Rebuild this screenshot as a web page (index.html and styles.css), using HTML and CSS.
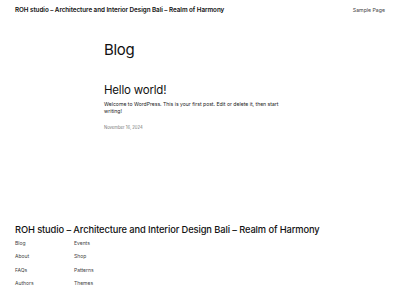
FILE: index.html
```html
<!DOCTYPE html>
<html lang="en">
<head>
    <meta charset="UTF-8">
    <meta name="viewport" content="width=device-width, initial-scale=1.0">
    <title>Blog</title>
    <link rel="stylesheet" href="styles.css">
</head>
<body>
    <header class="site-header">
        <a class="site-title" href="#">ROH studio – Architecture and Interior Design Bali – Realm of Harmony</a>
        <a class="nav-link" href="#">Sample Page</a>
    </header>

    <main class="content">
        <h1 class="page-title">Blog</h1>
        <article class="post">
            <h2 class="post-title">Hello world!</h2>
            <p class="post-excerpt">Welcome to WordPress. This is your first post. Edit or delete it, then start writing!</p>
            <div class="post-date">November 16, 2024</div>
        </article>
    </main>

    <footer class="site-footer">
        <div class="footer-title">ROH studio – Architecture and Interior Design Bali – Realm of Harmony</div>
        <div class="footer-links">
            <a href="#">Blog</a>
            <a href="#">Events</a>
            <a href="#">About</a>
            <a href="#">Shop</a>
            <a href="#">FAQs</a>
            <a href="#">Patterns</a>
            <a href="#">Authors</a>
            <a href="#">Themes</a>
        </div>
    </footer>
</body>
</html>
```

FILE: styles.css
```css
* {
    margin: 0;
    padding: 0;
    box-sizing: border-box;
}
body {
    background: #fff;
    color: #111;
    font-family: Inter, "Noto Sans", sans-serif;
    width: 400px;
    height: 300px;
    overflow: hidden;
}
a {
    color: inherit;
    text-decoration: none;
}
.site-header {
    display: flex;
    justify-content: space-between;
    align-items: center;
    padding: 2px 15px 0 15px;
    height: 18px;
}
.site-title {
    font-size: 6.3px;
    font-weight: 600;
    letter-spacing: -0.05px;
}
.nav-link {
    font-size: 5.2px;
    color: #444;
}

/* 主体内容 */
.content {
    width: 192px;
    margin: 0 auto;
    padding-top: 23px;
}
.page-title {
    font-size: 15px;
    font-weight: 400;
    letter-spacing: -0.3px;
    line-height: 18px;
}
.post {
    margin-top: 24px;
}
.post-title {
    font-size: 11.5px;
    font-weight: 400;
    letter-spacing: -0.2px;
    line-height: 14px;
}
.post-excerpt {
    margin-top: 4px;
    font-size: 5.1px;
    line-height: 7px;
    color: #222;
}
.post-date {
    margin-top: 10px;
    font-size: 4.2px;
    color: #777;
}

/* 页脚 */
.site-footer {
    padding: 0 15px;
    margin-top: 94px;
}
.footer-title {
    font-size: 9.3px;
    font-weight: 500;
    letter-spacing: -0.1px;
    line-height: 12px;
}
.footer-links {
    display: grid;
    grid-template-columns: 59px 60px;
    row-gap: 7.3px;
    margin-top: 4px;
    font-size: 5px;
    color: #444;
}
```
